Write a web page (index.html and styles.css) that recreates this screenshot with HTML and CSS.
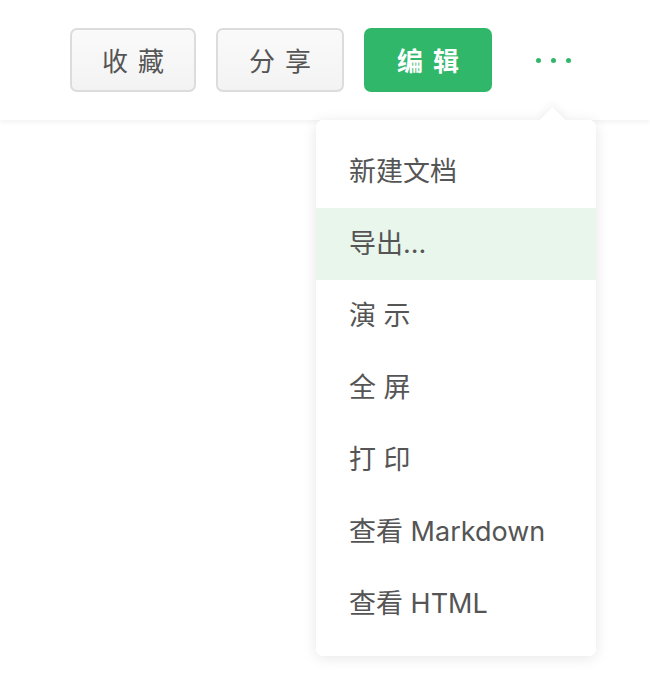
FILE: index.html
```html
<!DOCTYPE html>
<html lang="zh-CN">
<head>
    <meta charset="UTF-8">
    <meta name="viewport" content="width=device-width, initial-scale=1.0">
    <title>文档</title>
    <link rel="stylesheet" href="styles.css">
</head>
<body>
    <div class="page">
        <div class="header">
            <button class="btn">收藏</button>
            <button class="btn">分享</button>
            <button class="btn btn-primary">编辑</button>
            <button class="more-btn">
                <span class="dot"></span><span class="dot"></span><span class="dot"></span>
            </button>
        </div>

        <div class="menu">
            <span class="arrow"></span>
            <ul>
                <li>新建文档</li>
                <li class="active">导出...</li>
                <li>演 示</li>
                <li>全 屏</li>
                <li>打 印</li>
                <li>查看 Markdown</li>
                <li>查看 HTML</li>
            </ul>
        </div>
    </div>
</body>
</html>
```

FILE: styles.css
```css
html, body {
    margin: 0;
    height: 100%;
}
body {
    font-family: Inter, "Noto Sans CJK SC", sans-serif;
    background-color: #fff;
    color: #555;
}
.page {
    position: relative;
    min-height: 100%;
}
.header {
    height: 120px;
    display: flex;
    justify-content: flex-end;
    align-items: center;
    gap: 20px;
    padding-right: 56px;
    box-sizing: border-box;
    background: #fff;
    box-shadow: 0 2px 5px rgba(0, 0, 0, 0.06);
}
.btn {
    width: 128px;
    height: 64px;
    margin-top: -1px;
    border: 2px solid #dcdcdc;
    border-radius: 7px;
    background: linear-gradient(#fafafa, #f3f3f3);
    color: #555;
    font-family: "Noto Sans CJK SC", sans-serif;
    font-size: 26px;
    letter-spacing: 10px;
    text-indent: 10px;
    cursor: pointer;
}
.btn:first-child {
    width: 126px;
}
.btn-primary {
    border-color: #31b76a;
    background: #31b76a;
    color: #fff;
    font-weight: bold;
}
.more-btn {
    width: 82px;
    height: 64px;
    display: flex;
    justify-content: center;
    align-items: center;
    gap: 10px;
    border: none;
    background: none;
    padding: 0;
    cursor: pointer;
}
.dot {
    width: 5px;
    height: 5px;
    border-radius: 50%;
    background: #31b76a;
}
.menu {
    position: absolute;
    top: 120px;
    right: 54px;
    z-index: 2;
    width: 280px;
    background: #fff;
    border-radius: 7px;
    box-shadow: 0 2px 14px rgba(0, 0, 0, 0.1);
}
.arrow {
    position: absolute;
    top: -9px;
    right: 34px;
    width: 19px;
    height: 19px;
    background: #fff;
    transform: rotate(45deg);
    box-shadow: -3px -3px 8px rgba(0, 0, 0, 0.05);
}
.menu ul {
    position: relative;
    list-style: none;
    margin: 0;
    padding: 16px 0;
    background: #fff;
    border-radius: 7px;
}
.menu li {
    height: 72px;
    line-height: 72px;
    padding-left: 33px;
    font-size: 27px;
    color: #555;
    cursor: pointer;
}
.menu li.active {
    background-color: #e9f6ec;
}
```
